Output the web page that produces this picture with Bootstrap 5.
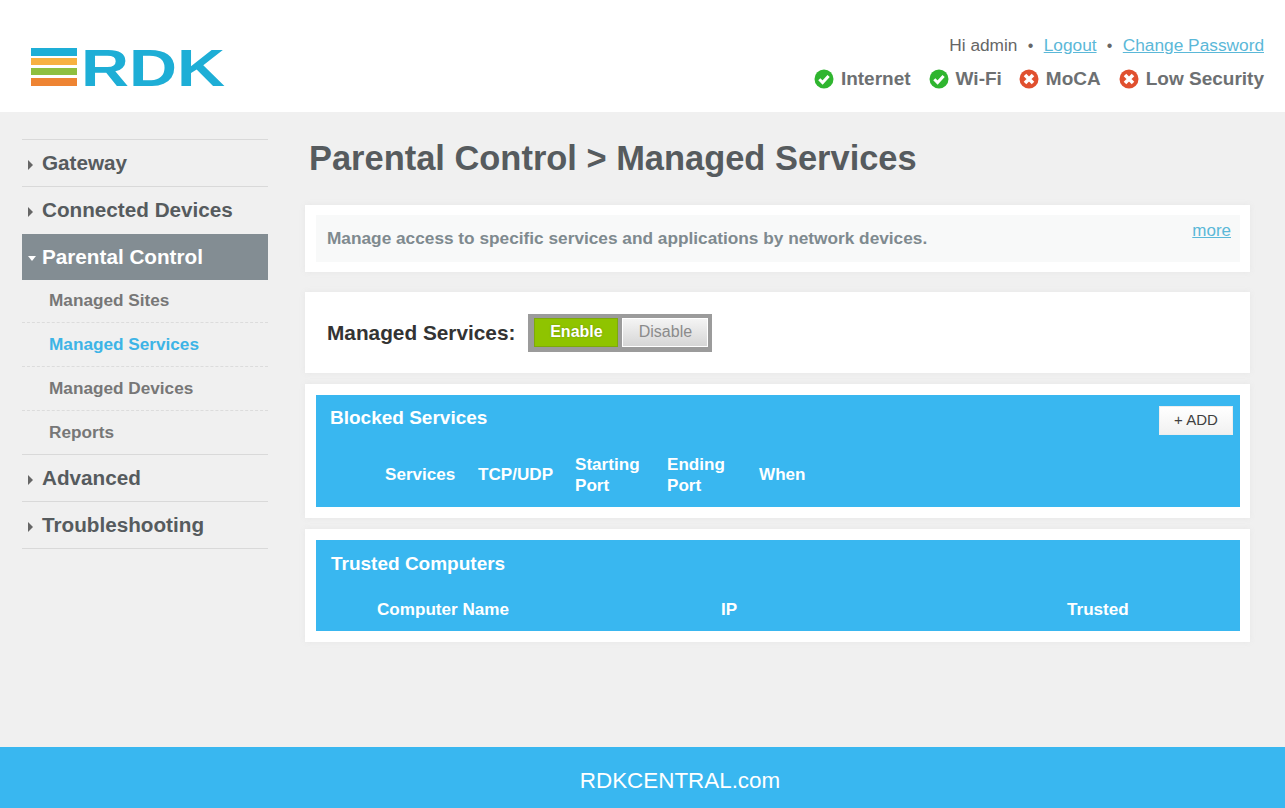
<!DOCTYPE html>
<html lang="en">
<head>
<meta charset="utf-8">
<title>Parental Control &gt; Managed Services</title>
<link href="https://cdn.jsdelivr.net/npm/bootstrap@5.3.0/dist/css/bootstrap.min.css" rel="stylesheet">
<style>
html,body{height:100%}
body{font-family:"Liberation Sans",Arial,sans-serif;background:#f0f0f0;color:#555;min-height:808px}
.top-head{height:112px;background:#fff;padding:0 21px 0 30px}
.logo-svg{display:block;width:230px;height:70px;margin-top:37px}
.user-line{font-size:17.3px;line-height:20px;color:#666;margin-top:34px;padding-top:1px}
.user-line a{color:#5bb8d8}
.user-line .dot{margin:0 5.5px;font-size:16px}
.stat-line{font-size:19px;line-height:24px;font-weight:700;color:#6d7072;margin-top:11px;gap:18px}
.stat-line svg{width:20px;height:20px;margin-right:7px;flex:none}
.stat-tight{margin-right:-1px}
.side-col{width:246px;margin-left:22px;margin-top:27px;flex:none}
.nav-top{display:flex;align-items:center;height:47px;border-top:1px solid #d9d9d9;font-size:20.7px;font-weight:700;color:#565b5e;text-decoration:none;padding-left:6px}
.nav-top:last-child{border-bottom:1px solid #d9d9d9;height:48px}
.nav-top .arr{width:0;height:0;border-style:solid;border-width:5px 0 5px 5px;border-color:transparent transparent transparent #666;margin-right:9px;margin-top:3px}
.nav-top.open{background:#838d93;color:#fff;border-top:0;height:46px;margin-top:1px}
.nav-top.open .arr{border-width:5px 4.5px 0 4.5px;border-color:#fff transparent transparent transparent;margin-right:6px;margin-top:2px}
.nav-sub{display:flex;align-items:center;height:44px;padding-left:27px;font-size:17.2px;font-weight:700;color:#777;text-decoration:none;border-bottom:1px dashed #dcdcdc}
.nav-sub.first{height:43px}
.nav-sub.active{color:#3db4e6}
.nav-sub.final{border-bottom-color:transparent;height:43px;padding-top:1px}
.main-col{width:945px;margin-left:37px;flex:none}
.page-title{font-size:34.45px;font-weight:700;line-height:42px;color:#565b5e;margin:25px 0 26px 4px}
.panel-box{background:#fff;box-shadow:0 0 6px #e6e6e6;padding:10px 10px 10px 11px}
.info-box{background:#f8f9f9;height:47px;padding:0 9px 0 11px;font-size:17.25px;font-weight:700;color:#7f8a8f}
.info-box a{color:#5bb8d8;font-weight:400;font-size:17px;margin-top:3px}
.switch-row{height:81px;margin-top:20px;padding:0 0 0 22px;font-size:20.8px;font-weight:700;color:#333}
.switch-frame{background:#9b9b9b;padding:4px 4px 4px 6px;margin-left:13px;gap:4px;height:38px;margin-top:1px}
.sw-btn{width:84px;height:29px;line-height:25px;border-radius:0;padding:0 0 2px;font-size:16px;font-weight:700}
.sw-on,.sw-on:hover{background:#8fc400;border:1px solid #7eaa0a;color:#fff;text-shadow:0 0 2px #6f8f00}
.sw-off,.sw-off:hover{width:86px;background:linear-gradient(#f4f4f4,#d6d6d6);border:1px solid #fff;color:#8b8b8b;font-weight:400}
.sect-box{margin-top:11px;padding-top:11px;padding-bottom:11px}
.blue-block{background:#39b7f0;color:#fff;font-weight:700}
.blue-one{height:112px}
.blue-two{height:91px}
.blue-title{font-size:19px;line-height:22px}
.blue-one .blue-title{padding:12px 7px 0 14px;height:47px}
.blue-two .blue-title{padding:13px 0 0 15px;height:48px}
.add-btn,.add-btn:hover{width:74px;height:29px;padding:0;border:1px solid #eee;border-radius:0;background:linear-gradient(#fff,#f1f1f1);color:#3f3f3f;font-size:15px;margin-top:-1px}
.head-tbl{table-layout:fixed;border-collapse:collapse;color:#fff}
.head-tbl th{font-size:17.1px;line-height:21px;padding:0;vertical-align:middle;font-weight:700}
.blue-one .head-tbl tr{height:65px}
.blue-two .head-tbl tr{height:43px}
.foot-bar{height:61px;background:#39b7f0;color:#fff;font-size:22.4px;margin-top:auto;padding:6px 0 0 75px}
</style>
</head>
<body class="d-flex flex-column">
<header class="top-head d-flex justify-content-between align-items-start">
  <svg class="logo-svg" viewBox="0 -10 230 70" role="img" aria-label="RDK">
    <rect x="1" y="1" width="46" height="8" fill="#1eaed6"/>
    <rect x="1" y="11" width="46" height="7" fill="#f7b141"/>
    <rect x="1" y="21" width="46" height="7" fill="#8fbf3f"/>
    <rect x="1" y="31" width="46" height="8" fill="#ee8433"/>
    <text x="51" y="39" font-family="Liberation Sans, Arial, sans-serif" font-weight="700" font-size="52" fill="#1eaed6" textLength="144" lengthAdjust="spacingAndGlyphs">RDK</text>
  </svg>
  <div class="d-flex flex-column align-items-end">
    <div class="user-line">Hi admin <span class="dot">•</span> <a href="#">Logout</a> <span class="dot">•</span> <a href="#">Change Password</a></div>
    <div class="stat-line d-flex align-items-center">
      <span class="d-flex align-items-center"><svg viewBox="0 0 20 20"><circle cx="10" cy="10" r="9.5" fill="#2fb52f"/><path d="M5.3 10.2l3.3 3.3 6-6.5" fill="none" stroke="#fff" stroke-width="3"/></svg>Internet</span>
      <span class="d-flex align-items-center stat-tight"><svg viewBox="0 0 20 20"><circle cx="10" cy="10" r="9.5" fill="#2fb52f"/><path d="M5.3 10.2l3.3 3.3 6-6.5" fill="none" stroke="#fff" stroke-width="3"/></svg>Wi-Fi</span>
      <span class="d-flex align-items-center"><svg viewBox="0 0 20 20"><circle cx="10" cy="10" r="9.5" fill="#e0502f"/><path d="M6 6l8 8M14 6l-8 8" fill="none" stroke="#fff" stroke-width="3.6"/></svg>MoCA</span>
      <span class="d-flex align-items-center"><svg viewBox="0 0 20 20"><circle cx="10" cy="10" r="9.5" fill="#e0502f"/><path d="M6 6l8 8M14 6l-8 8" fill="none" stroke="#fff" stroke-width="3.6"/></svg>Low Security</span>
    </div>
  </div>
</header>
<div class="d-flex">
  <nav class="side-col">
    <a class="nav-top" href="#"><span class="arr"></span>Gateway</a>
    <a class="nav-top" href="#"><span class="arr"></span>Connected Devices</a>
    <a class="nav-top open" href="#"><span class="arr"></span>Parental Control</a>
    <a class="nav-sub first" href="#">Managed Sites</a>
    <a class="nav-sub active" href="#">Managed Services</a>
    <a class="nav-sub" href="#">Managed Devices</a>
    <a class="nav-sub final" href="#">Reports</a>
    <a class="nav-top" href="#"><span class="arr"></span>Advanced</a>
    <a class="nav-top" href="#"><span class="arr"></span>Troubleshooting</a>
  </nav>
  <main class="main-col">
    <h1 class="page-title">Parental Control &gt; Managed Services</h1>
    <section class="panel-box">
      <div class="info-box d-flex justify-content-between align-items-center">
        <span>Manage access to specific services and applications by network devices.</span>
        <a href="#" class="align-self-start">more</a>
      </div>
    </section>
    <section class="panel-box switch-row d-flex align-items-center">
      <span>Managed Services:</span>
      <div class="switch-frame d-flex">
        <button type="button" class="btn sw-btn sw-on">Enable</button>
        <button type="button" class="btn sw-btn sw-off">Disable</button>
      </div>
    </section>
    <section class="panel-box sect-box">
      <div class="blue-block blue-one">
        <div class="blue-title d-flex justify-content-between align-items-start">
          <span>Blocked Services</span>
          <button type="button" class="btn add-btn">+ ADD</button>
        </div>
        <table class="head-tbl"><tr>
          <th style="width:162px;padding-left:69px">Services</th>
          <th style="width:97px">TCP/UDP</th>
          <th style="width:92px">Starting<br>Port</th>
          <th style="width:92px">Ending<br>Port</th>
          <th style="width:100px">When</th>
        </tr></table>
      </div>
    </section>
    <section class="panel-box sect-box">
      <div class="blue-block blue-two">
        <div class="blue-title">Trusted Computers</div>
        <table class="head-tbl"><tr>
          <th style="width:405px;padding-left:61px">Computer Name</th>
          <th style="width:346px">IP</th>
          <th style="width:100px">Trusted</th>
        </tr></table>
      </div>
    </section>
  </main>
</div>
<footer class="foot-bar d-flex align-items-center justify-content-center">RDKCENTRAL.com</footer>
<script src="https://cdn.jsdelivr.net/npm/bootstrap@5.3.0/dist/js/bootstrap.bundle.min.js"></script>
</body>
</html>
